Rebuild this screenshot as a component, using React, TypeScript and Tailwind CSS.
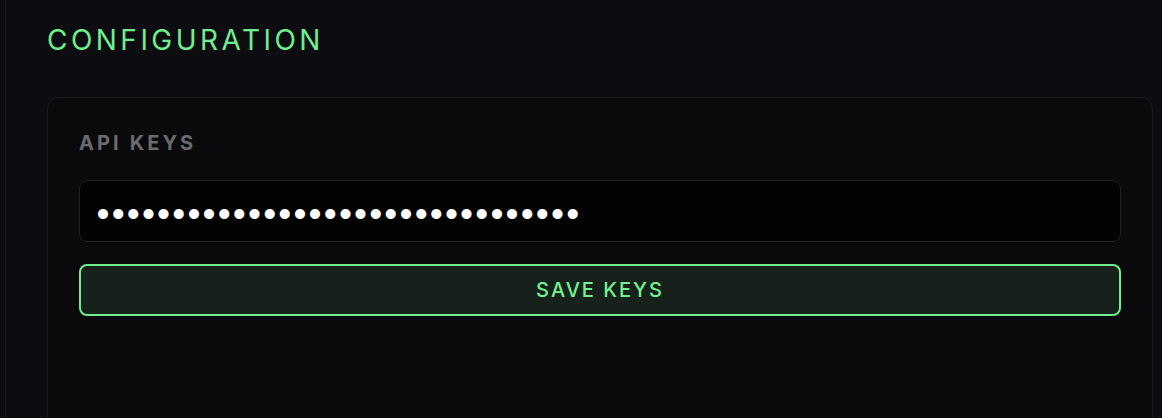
export default function App() {
  return (
    <div className="h-[418px] overflow-hidden bg-[#0d0d11] pl-[5px] font-['Inter',sans-serif]">
      <div className="h-full border-l border-[#1b1b20] pl-[41px] pr-[9px] pt-[22px]">
        <h1 className="text-[28px] leading-[36px] font-normal tracking-[0.124em] text-[#70ee8e]">CONFIGURATION</h1>

        <div className="mt-[39px] h-[400px] rounded-xl border border-[#1c1c20] bg-[#0a0a0c] px-[31px] pt-[31px]">
          <div className="text-[20px] leading-[28px] font-bold tracking-[0.155em] text-[#6b6b6e]">API KEYS</div>

          <input
            type="password"
            readOnly
            defaultValue="sk3f9a8b7c6d5e4f3a2b1c0d9e8f7a6b"
            className="mt-[23px] block h-[62px] w-full rounded-lg border border-[#232327] bg-[#030303] px-[14px] text-[32px] tracking-[-2.85px] text-white outline-none"
          />

          <button className="mt-[22px] flex h-[52px] w-full items-center justify-center rounded-lg border-2 border-[#70ee8e] bg-[#15211a] text-[20px] font-medium tracking-[0.1em] text-[#74f293]">
            SAVE KEYS
          </button>
        </div>
      </div>
    </div>
  );
}
